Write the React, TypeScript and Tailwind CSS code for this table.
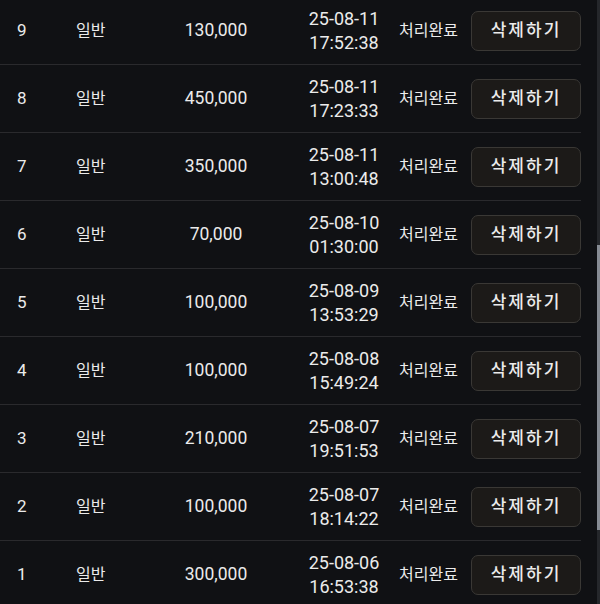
import React from "react";

const rows = [
  { no: 9, amount: "130,000", date: "25-08-11", time: "17:52:38" },
  { no: 8, amount: "450,000", date: "25-08-11", time: "17:23:33" },
  { no: 7, amount: "350,000", date: "25-08-11", time: "13:00:48" },
  { no: 6, amount: "70,000", date: "25-08-10", time: "01:30:00" },
  { no: 5, amount: "100,000", date: "25-08-09", time: "13:53:29" },
  { no: 4, amount: "100,000", date: "25-08-08", time: "15:49:24" },
  { no: 3, amount: "210,000", date: "25-08-07", time: "19:51:53" },
  { no: 2, amount: "100,000", date: "25-08-07", time: "18:14:22" },
  { no: 1, amount: "300,000", date: "25-08-06", time: "16:53:38" },
];

export default function App() {
  return (
    <div
      className="relative w-[600px] h-[604px] overflow-hidden bg-[#101114] text-[#ebebeb]"
      style={{ fontFamily: "Roboto, 'Noto Sans CJK KR', sans-serif" }}
    >
      {/* list */}
      <div className="w-[581px] -mt-[3px]">
        {rows.map((r) => (
          <div
            key={r.no}
            className="flex items-center h-[68px] border-b border-[#2a2a2d] pl-[17px]"
          >
            <div className="w-[59px] text-[17px]">{r.no}</div>
            <div className="w-[94px] text-[16px]">일반</div>
            <div className="w-[92px] text-center text-[17.5px]">{r.amount}</div>
            <div className="ml-[34px] w-[96px] text-center text-[18px] leading-[24px]">
              <div>{r.date}</div>
              <div>{r.time}</div>
            </div>
            <div className="ml-[7px] text-[16px]">처리완료</div>
            <div className="ml-auto w-[110px] h-[40px] flex items-center justify-center rounded-[7px] border border-[#3a3835] bg-[#1c1a18] text-[17px] font-medium tracking-[2px]">
              삭제하기
            </div>
          </div>
        ))}
      </div>

      {/* scrollbar */}
      <div className="absolute right-0 top-0 w-[3px] h-full bg-[#25272b]">
        <div className="mt-[245px] h-[285px] bg-[#868b93]" />
      </div>
    </div>
  );
}
